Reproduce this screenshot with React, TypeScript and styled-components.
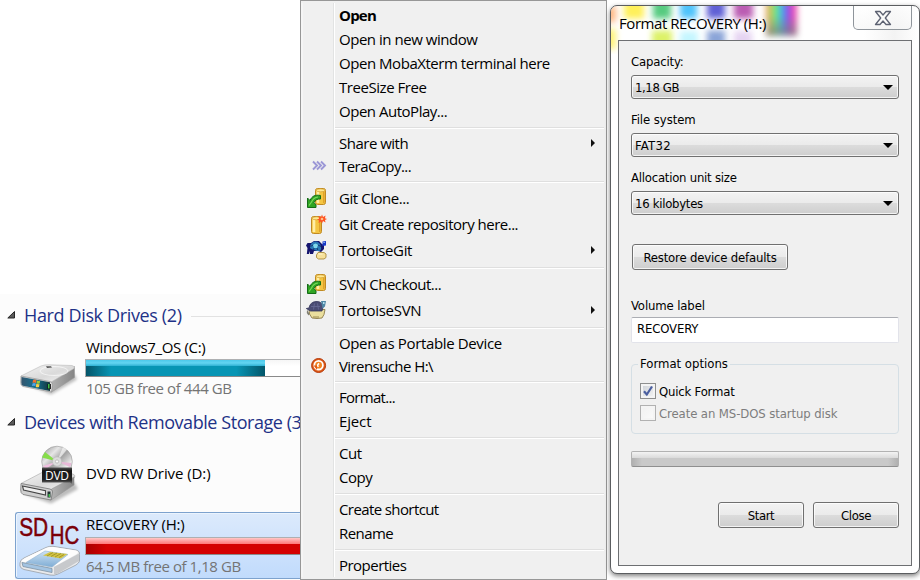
import React from "react";
import styled, { createGlobalStyle, css } from "styled-components";

const GlobalStyle = createGlobalStyle`
  *, *::before, *::after { box-sizing: border-box; }
  body { margin: 0; background: #fff; overflow: hidden; }
`;

const ui = `"Open Sans", "Noto Sans", sans-serif`;
const dlg = `"DejaVu Sans Condensed", "DejaVu Sans", sans-serif`;

const Page = styled.main`
  display: flex;
  align-items: flex-start;
  width: 920px;
  height: 580px;
  overflow: hidden;
  background: #fff;
  font: 15px ${ui};
  color: #000;
  white-space: nowrap;
`;

const Label = styled.span<{ $ls?: number }>`
  letter-spacing: ${(p) => p.$ls ?? -0.5}px;
`;

/* ---------- drive list ---------- */

const Explorer = styled.section`
  width: 300px;
  height: 580px;
  overflow: hidden;
  padding-top: 294px;
  background: linear-gradient(#fff 294px, #fcfcfc 294px);
`;

const GroupHeader = styled.header<{ $h: number; $ls: number }>`
  display: flex;
  align-items: center;
  height: ${(p) => p.$h}px;
  padding: 0 0 1px 7px;
  color: #1e3287;
  font-size: 18px;
  letter-spacing: ${(p) => p.$ls}px;
  svg { flex: none; margin: 0 9px 0 0; }
`;

const HeaderRule = styled.i`
  flex: 1;
  height: 1px;
  margin: 3px 0 0 9px;
  background: #e2e2e2;
`;

const Drive = styled.article<{ $h: number; $selected?: boolean }>`
  display: flex;
  height: ${(p) => p.$h}px;
  margin-left: 15px;
  border: 1px solid transparent;
  border-right: 0;
  ${(p) =>
    p.$selected &&
    css`
      border-color: #7da2ce;
      border-radius: 3px 0 0 3px;
      background: linear-gradient(#dceafc, #c1dbfc);
      box-shadow: inset 1px 1px 0 #ebf4fe;
    `}
`;

const DriveIcon = styled.div`
  flex: none;
  width: 69px;
  svg { display: block; overflow: visible; }
`;

const DriveBody = styled.div<{ $center?: boolean }>`
  display: flex;
  flex: 1;
  flex-direction: column;
  justify-content: ${(p) => (p.$center ? "center" : "flex-start")};
  padding: ${(p) => (p.$center ? "0 0 5px 1px" : "0")};
`;

const DriveName = styled.div<{ $h: number }>`
  height: ${(p) => p.$h}px;
  padding-left: 1px;
  line-height: ${(p) => p.$h - 2}px;
`;

const DriveMeta = styled.div`
  height: 23px;
  padding-left: 1px;
  line-height: 23px;
  color: #747474;
`;

const Gauge = styled.div`
  height: 18px;
  border: 1px solid #aeb0b2;
  border-bottom-color: #8a8a8a;
  border-right: 0;
  background: linear-gradient(#f6f6f6, #fff 40%);
`;

const GaugeFill = styled.div<{ $tone: "blue" | "red"; $w: number }>`
  width: ${(p) => p.$w}px;
  height: 16px;
  background: ${(p) =>
    p.$tone === "blue"
      ? `linear-gradient(#4cc8ea 0, #63d5f2 3px, #2eb1d3 6px, transparent 6px), linear-gradient(90deg, #045468, #0795b4 14%, #0795b4 84%, #04566a)`
      : `linear-gradient(#ffc9c9 0, #ff9c9c 3px, #f77 6px, transparent 6px), linear-gradient(90deg, #a80000, #d40000 9%)`};
`;

const Caret = () => (
  <svg width="8" height="8" viewBox="0 0 8 8">
    <path d="M7.5 .5V7H.8z" fill="#595959" stroke="#262626" />
  </svg>
);

const Defs = () => (
  <defs>
    <linearGradient id="lid" x1="0" y1="0" x2="1" y2="1">
      <stop offset="0" stopColor="#f4f4f4" />
      <stop offset=".55" stopColor="#dadada" />
      <stop offset="1" stopColor="#f5f5f5" />
    </linearGradient>
    <linearGradient id="side" x1="0" y1="0" x2="1" y2="0">
      <stop offset="0" stopColor="#b5b5b5" />
      <stop offset="1" stopColor="#858585" />
    </linearGradient>
    <linearGradient id="metal" x1="0" y1="0" x2="1" y2="1">
      <stop offset="0" stopColor="#8d8d8d" />
      <stop offset=".3" stopColor="#e6e6e6" />
      <stop offset=".5" stopColor="#a4a4a4" />
      <stop offset=".75" stopColor="#eee" />
      <stop offset="1" stopColor="#999" />
    </linearGradient>
    <linearGradient id="plate" x1="0" y1="0" x2="0" y2="1">
      <stop offset="0" stopColor="#555" />
      <stop offset=".2" stopColor="#151515" />
      <stop offset=".75" stopColor="#222" />
      <stop offset="1" stopColor="#777" />
    </linearGradient>
    <linearGradient id="glass" x1="0" y1="0" x2="1" y2="0">
      <stop offset="0" stopColor="#35566e" />
      <stop offset=".5" stopColor="#14708f" />
      <stop offset="1" stopColor="#12343c" />
    </linearGradient>
    <linearGradient id="card" x1="0" y1="0" x2="0" y2="1">
      <stop offset="0" stopColor="#cfe2f3" />
      <stop offset="1" stopColor="#7fadd5" />
    </linearGradient>
    <filter id="soft" x="-20%" y="-50%" width="140%" height="200%">
      <feGaussianBlur stdDeviation="1.5" />
    </filter>
  </defs>
);

/* Drive bodies share one 64-wide canvas that starts at the row's left edge. */
const HardDisk = () => (
  <svg width="64" height="66" viewBox="0 7.5 64 66">
    <Defs />
    <path d="M8 54 35 65 61 50 58 44z" opacity=".25" filter="url(#soft)" />
    <path d="M34 50 58.500 37V48L35.500 62.500 33 61.500z" fill="url(#side)" stroke="#999" strokeWidth=".6" />
    <path d="M5 46.500 25 36.500Q29 35 33 35.300L56 36Q59.500 37 58 39L36 52Q34 53 31 52.500L6 48.500z" fill="url(#lid)" stroke="#bbb" strokeWidth=".6" />
    <ellipse cx="38" cy="41.500" rx="14" ry="4.500" fill="none" stroke="#fff" opacity=".6" />
    <path d="M30 36.800h5l1 1.200-5 .4z" fill="#555" />
    <path d="M5 46.500 34 52Q37 53 36.500 56L35.500 62.500 7 57Q4.500 56 4.700 53z" fill="#dcdcdc" stroke="#888" strokeWidth=".6" />
    <path d="M5.500 47.500 34 52.800V61.500L7 56.200Q5.200 55.500 5.300 53z" fill="url(#glass)" />
    <path d="M17 50.500q1.800-1 3.500 0l-.5 3q-1.700-.8-3.500 0z" fill="#f07030" />
    <path d="M21 51q1.500.8 3.200.2l-.5 2.800q-1.500.7-3.200 0z" fill="#9ccb3c" />
    <path d="M16.500 54q1.600-.9 3.300 0l-.5 2.600q-1.600-.8-3.300 0z" fill="#50a5e8" />
    <path d="M20.300 54.300q1.500.8 3.200.2l-.5 2.900q-1.500.7-3.200 0z" fill="#fbd044" />
    <path d="M33.200 54.500v5" stroke="#111" strokeWidth="3.400" />
    <path d="M32.800 54.500v4.500" stroke="#46d14f" strokeWidth="1.400" />
  </svg>
);

const DvdDrive = () => (
  <svg width="64" height="66" viewBox="0 0 64 66">
    <path d="M8 55 35 64.500 62 50 58 43z" opacity=".25" filter="url(#soft)" />
    <path d="M5 44.500 27 33 57 35Q60 36.500 58.500 38.500L35.500 51z" fill="url(#lid)" stroke="#b0b0b0" strokeWidth=".7" />
    <path d="M35.500 50 58 38V46L35 61z" fill="url(#side)" stroke="#999" strokeWidth=".6" />
    <path d="M5 44.500 34 50Q37 51 36.500 53L35 61 7 55.500Q4.500 54 4.700 51z" fill="#cfcfcf" stroke="#777" strokeWidth=".8" />
    <path d="M6.500 47 29.500 51.800V56L7.500 51z" fill="#eee" stroke="#444" strokeWidth="1.100" />
    <path d="M33 52.500v6" stroke="#233" strokeWidth="3" />
    <path d="M33.300 55v3" stroke="#46c04f" strokeWidth="1.500" />
    <circle cx="41" cy="22.500" r="15.300" fill="url(#metal)" stroke="#999" strokeWidth=".6" />
    <path d="M41 22.500 26 18.500 29 13z" fill="#86dd4a" />
    <path d="M41 22.500 54 28 55.500 24z" fill="#e8b9d8" />
    <path d="M41 22.500 27 27 29.500 30z" fill="#f1bfe0" />
    <path d="M41 22.500 47 8 51 10.500z" fill="#fff" opacity=".6" />
    <circle cx="41" cy="22.500" r="4.600" fill="#dcdcdc" stroke="#bbb" strokeWidth=".6" />
    <circle cx="41" cy="22.500" r="1.600" fill="#fafafa" stroke="#999" strokeWidth=".5" />
    <path d="M26 28.500h30V45L54 43.500 26 43.500z" fill="url(#plate)" />
    <text x="41" y="40.500" fill="#fff" fontFamily="Open Sans, sans-serif" fontSize="12" textAnchor="middle" textLength="24">DVD</text>
  </svg>
);

const SdCard = () => (
  <svg width="64" height="66" viewBox="0 0 64 66">
    <g fill="#7b0008" stroke="#7b0008" strokeWidth=".5" fontFamily="Liberation Sans, sans-serif" fontSize="26.500">
      <text x="3.200" y="22.500" textLength="29" lengthAdjust="spacingAndGlyphs">SD</text>
      <text x="33.800" y="30.500" textLength="29.500" lengthAdjust="spacingAndGlyphs">HC</text>
    </g>
    <path d="M4 50 Q4 47 8 45L30 34.500Q33 33 37 33.300L60 37Q64 38 63.500 41.500V48Q63 50 60 52L42 61Q38 63 34 62L8 56.500Q4.500 55.500 4 53z" fill="#e9eaec" stroke="#9aa0a6" strokeWidth=".8" />
    <path d="M5 48.500Q6 46.500 9 45L30 35Q33 33.700 37 34L60 37.500Q64 39 60 41.500L42 51.500Q38 54 33 53z" fill="#fdfdfd" />
    <path d="M38 54 63 40.500V48L42 60.500 38 61.500z" fill="#c7c9cc" />
    <path d="M6 49.500 36 55.500V59.500L7 53.500z" fill="#a3c4e2" stroke="#7f93a5" strokeWidth=".8" />
    <path d="M10 49.500 29 38 52 41.500 36 54z" fill="url(#card)" stroke="#8fb1d0" strokeWidth=".6" />
    <path d="M27 42.500 34 39 51.500 41 45 45.500z" fill="#d2c344" />
    <path d="m31 43 6-3.500m-2 4 6-3.500m-2 4 6-3.500m-2 4 5-3" stroke="#8f821c" strokeWidth=".7" />
  </svg>
);

/* ---------- context menu ---------- */

const Menu = styled.nav`
  display: flex;
  flex-direction: column;
  width: 307px;
  height: 580px;
  padding: 3px 2px 0 2px;
  border: 1px solid #979797;
  background: linear-gradient(90deg, #f5f5f5 2px, #f0f0f0 2px, #f0f0f0 32px, #e2e3e3 32px, #e2e3e3 33px, #fff 33px, #fff 34px, #f0f0f0 34px) 0 2px / 100% 574px no-repeat #f0f0f0;
`;

const Item = styled.div<{ $h: number; $bold?: boolean }>`
  display: flex;
  align-items: center;
  height: ${(p) => p.$h}px;
  font-weight: ${(p) => (p.$bold ? 700 : 400)};
  line-height: 20px;
  ${Label} { padding-bottom: 2px; }
`;

const Slot = styled.span`
  display: flex;
  flex: none;
  width: 36px;
  height: 22px;
  padding-left: 3px;
  svg { display: block; }
`;

const SubArrow = styled.i`
  margin: -2px 9px 0 auto;
  border: solid transparent;
  border-width: 4px 0 4px 4px;
  border-left-color: #111;
`;

const Rule = styled.hr`
  flex: none;
  width: 269px;
  height: 2px;
  margin: 3px 0 3px 32px;
  border: 0;
  background: linear-gradient(#dfdfdf 50%, #fff 50%);
`;

const Cylinder = ({ x, y, h }: { x: number; y: number; h: number }) => (
  <g transform={`translate(${x} ${y})`}>
    <rect x=".5" y=".5" width="10" height={h} rx="2" fill="#f4c542" stroke="#c08a22" />
    <path d={`M3 3v${h - 4}`} stroke="#ffeea6" strokeWidth="2.600" />
    <path d={`M8.800 3v${h - 4}`} stroke="#dd9f2a" strokeWidth="1.400" />
    <ellipse cx="5.500" cy="2.300" rx="4.200" ry="1.500" fill="#ffe890" stroke="#c99427" strokeWidth=".6" />
  </g>
);

const Icons: Record<string, React.ReactNode> = {
  tera: (
    <path d="m7.500 6 4 4-4 4m4-8 4 4-4 4m4-8 4 4-4 4" transform="translate(-.5 -.5)" fill="none" stroke="#9b97d6" strokeWidth="1.900" />
  ),
  checkout: (
    <>
      <Cylinder x={9} y={0} h={16} />
      <path d="M1.500 19.500V10l2.500 2.500C6 8 9 6.500 14.500 7.500V11q-4.500-.5-6.500 3.500l2 2.500V19.500z" fill="#2fa423" stroke="#146c16" />
      <path d="M3 17.500 5.500 14Q7.500 9.500 12 9" fill="none" stroke="#7bd95c" strokeWidth="1.200" />
    </>
  ),
  create: (
    <>
      <Cylinder x={5} y={2} h={17} />
      <path d="m16 .5 1 2.500L19.500 1.500l-.5 2.800 2 .7-2 1 .5 2.500-2.500-1.500L16 9.500 15 7.500 12.500 9l.5-2.500-2-1 2-.7L12.500 2 15 3z" fill="#ff5522" />
      <circle cx="16" cy="5" r="1.300" fill="#ffc08a" />
    </>
  ),
  tgit: (
    <>
      <path d="M0 5.500 1.500 3h3.500L8 1h5l3 3 2 1v4l-3 3-3-1H8l-1 3H4l-.5-3L3 14H.8l.7-6z" fill="#14146e" />
      <path d="M4 7q1-5.500 5.500-5.500T15 7t-5.500 3.500T4 7z" fill="#2878b4" />
      <path d="M7 5q2.500-3 5 0l-1 3H8z" fill="#7fd8ea" />
      <path d="M4.500 6.500 7 5m8 1.500L12 5m-4 3-.5 2.500m3.500-2.500.8 2" stroke="#14265c" strokeWidth=".8" />
      <path d="M16.500 1.500 20 1v4.500L16.500 6z" fill="#1638c8" />
      <path d="M17.500 2.500h1.200" stroke="#a9d4ff" strokeWidth="1.200" />
      <path d="M10.500 15 12 12.500h6L20 14v3.500L18 19h-5.500l-2-1.500z" fill="#f7e19a" stroke="#a98b3c" strokeWidth=".9" />
      <path d="M12.500 14h4" stroke="#fff6cf" />
    </>
  ),
  tsvn: (
    <>
      <path d="M3 9.500h16L18 14.500l-2 3.500-5 .5-5-.5L3.500 14z" fill="#ebdf9e" stroke="#8b7b46" strokeWidth=".9" />
      <path d="M.3 8.500 3 8Q4 2 10 1.500T17 7l-1 4H4.500z" fill="#4b4c74" stroke="#33355a" strokeWidth=".8" />
      <path d="M5 6.500h9M8.500 3.500l-1 6m4-6 1 6" stroke="#686b96" strokeWidth=".8" />
      <path d="M15 1h5l-1 5.500-2.500 2z" fill="#4f86a4" />
      <path d="M17 2h1.500v2H17z" fill="#b4dff0" />
      <path d="M1 9.500 3.500 14l-1 1.500L.8 13z" fill="#7d7c70" />
      <path d="M7 17h6" stroke="#9c8b50" />
    </>
  ),
  virus: (
    <>
      <circle cx="12.600" cy="9.500" r="7" fill="#dd5814" stroke="#b53a0c" />
      <circle cx="12.600" cy="9.200" r="4.300" fill="#f28320" stroke="#fff" strokeWidth="1.800" />
      <path d="M12.500 10.800q-2-1.800.7-3.300" fill="none" stroke="#fff" strokeWidth="1.500" />
      <path d="M7.600 9.500h3.400v4.500z" fill="#e05a14" />
    </>
  ),
};

type Entry = null | { t: string; h?: number; ls?: number; icon?: string; sub?: boolean; bold?: boolean };

const entries: Entry[] = [
  { t: "Open", bold: true, ls: -0.8 },
  { t: "Open in new window", ls: -0.47 },
  { t: "Open MobaXterm terminal here", ls: -0.46 },
  { t: "TreeSize Free", ls: -0.45 },
  { t: "Open AutoPlay...", ls: -0.48 },
  null,
  { t: "Share with", sub: true, ls: -0.5 },
  { t: "TeraCopy...", h: 22, icon: "tera", ls: -0.55 },
  null,
  { t: "Git Clone...", h: 26, icon: "checkout", ls: -0.45 },
  { t: "Git Create repository here...", h: 26, icon: "create", ls: -0.5 },
  { t: "TortoiseGit", h: 26, icon: "tgit", sub: true, ls: -0.38 },
  null,
  { t: "SVN Checkout...", h: 26, icon: "checkout", ls: -0.52 },
  { t: "TortoiseSVN", h: 26, icon: "tsvn", sub: true, ls: -0.3 },
  null,
  { t: "Open as Portable Device", ls: -0.36 },
  { t: "Virensuche H:\\", h: 22, icon: "virus", ls: -0.58 },
  null,
  { t: "Format...", ls: -0.7 },
  { t: "Eject", ls: -0.15 },
  null,
  { t: "Cut", ls: -0.5 },
  { t: "Copy", ls: -0.5 },
  null,
  { t: "Create shortcut", ls: -0.6 },
  { t: "Rename", ls: -0.56 },
  null,
  { t: "Properties", ls: -0.53 },
];

/* ---------- format dialog ---------- */

const Dialog = styled.section`
  display: flex;
  flex-direction: column;
  width: 310px;
  height: 569px;
  margin: 5px 0 0 3px;
  padding: 0 7px 7px;
  border: 1px solid #5b5d60;
  border-radius: 7px;
  background:
    linear-gradient(90deg, transparent 82%, rgba(240, 240, 240, 0.8) 92%, transparent) 0 0 / 100% 34px no-repeat,
    #fff;
  box-shadow: 0 2px 5px rgba(0, 0, 0, 0.5), inset 0 0 0 1px rgba(255, 255, 255, 0.7);
  font: 13px ${dlg};
`;

const TitleBar = styled.header`
  position: relative;
  display: flex;
  flex: none;
  justify-content: space-between;
  height: 34px;
`;

/* Blurred colours showing through the translucent title bar. */
const Backdrop = styled.div`
  position: absolute;
  inset: 0 0 -14px -7px;
  overflow: hidden;
  border-top-left-radius: 6px;
`;

const Blot = styled.span<{ $x: number; $y: number; $w: number; $h: number; $c: string }>`
  position: absolute;
  left: ${(p) => p.$x}px;
  top: ${(p) => p.$y}px;
  width: ${(p) => p.$w}px;
  height: ${(p) => p.$h}px;
  background: ${(p) => p.$c};
  filter: blur(3px);
`;

const blots: [number, number, number, number, string][] = [
  [-6, 0, 11, 16, "#ffb985"],
  [13, -7, 20, 20, "#fff05a"],
  [42, -7, 18, 20, "#56cb80"],
  [69, -7, 17, 20, "#4fc4fb"],
  [96, -7, 18, 20, "#6060d5"],
  [123, -7, 19, 20, "#bb5cb3"],
  [-6, 23, 11, 20, "#fff478"],
  [41, 24, 20, 20, "#ddf268"],
  [69, 25, 18, 20, "#c5f6ff"],
  [96, 24, 18, 20, "#8ba5d8"],
  [123, 25, 18, 20, "#e6d4f2"],
  [155, -7, 31, 37, "linear-gradient(transparent 45%, rgba(128,128,128,.85)), linear-gradient(90deg,#ee8a50,#b8e060 20%,#4ce3a0 36%,#4fb7ef 52%,#6f5cf0 66%,#e445cd 84%,#ee5292)"],
];

const Title = styled.h1`
  position: relative;
  margin: 6px 0 0 1px;
  font: 15px/22px ${ui};
  letter-spacing: -0.44px;
  text-shadow: 0 0 7px rgba(255, 255, 255, 0.8);
`;

const CloseBox = styled.button`
  position: relative;
  display: flex;
  align-items: center;
  justify-content: center;
  width: 59px;
  height: 24px;
  padding: 0 0 0 1px;
  border: 1px solid #8f959b;
  border-top: 0;
  border-radius: 0 0 5px 5px;
  background: linear-gradient(rgba(255, 255, 255, 0.6), rgba(244, 244, 244, 0.6));
`;

const Panel = styled.form`
  position: relative;
  display: flex;
  flex: none;
  flex-direction: column;
  width: 294px;
  height: 526px;
  padding: 11px 12px 0;
  border: 1px solid #6d6f72;
  background: #f0f0f0;
`;

const Field = styled.label<{ $gap?: number }>`
  display: flex;
  flex-direction: column;
  margin-bottom: ${(p) => p.$gap ?? 11}px;
`;

const Caption = styled.span<{ $ls: number; $h?: number }>`
  height: ${(p) => p.$h ?? 23}px;
  line-height: 20px;
  letter-spacing: ${(p) => p.$ls}px;
`;

const face = css`
  border: 1px solid #707070;
  border-radius: 3px;
  background: linear-gradient(#f3f3f3, #ebebeb 48%, #dcdcdc 50%, #cecece);
  box-shadow: inset 0 0 0 1px rgba(255, 255, 255, 0.75);
`;

const Combo = styled.div<{ $ls: number }>`
  ${face}
  display: flex;
  align-items: center;
  justify-content: space-between;
  height: 24px;
  padding: 0 5px 0 3px;
  letter-spacing: ${(p) => p.$ls}px;
  &::after {
    content: "";
    border: solid transparent;
    border-width: 5px 5px 0;
    border-top-color: #000;
  }
`;

const Button = styled.button<{ $w: number; $ls: number }>`
  ${face}
  width: ${(p) => p.$w}px;
  height: 26px;
  padding: 0;
  color: #000;
  font: 13px ${dlg};
  letter-spacing: ${(p) => p.$ls}px;
`;

const RestoreRow = styled.div`
  margin: 18px 0 26px 1px;
`;

const TextBox = styled.div`
  height: 26px;
  padding: 0 5px;
  border: 1px solid #e2e3ea;
  border-top-color: #abadb3;
  border-radius: 2px;
  background: #fff;
  line-height: 22px;
  letter-spacing: -0.15px;
`;

const Options = styled.fieldset`
  height: 80px;
  margin: 11px 0 17px;
  padding: 6px 8px 0;
  border: 1px solid #d5dfe5;
  border-radius: 4px;
  legend {
    height: 20px;
    padding: 0 2px;
    margin-left: -2px;
    line-height: 20px;
  }
`;

const CheckRow = styled.div<{ $ls: number; $off?: boolean }>`
  display: flex;
  align-items: center;
  gap: 3px;
  height: 22px;
  color: ${(p) => (p.$off ? "#7d7d7d" : "#000")};
  letter-spacing: ${(p) => p.$ls}px;
`;

const CheckBox = styled.span<{ $off?: boolean }>`
  display: grid;
  place-items: center;
  width: 16px;
  height: 16px;
  border: 1px solid ${(p) => (p.$off ? "#b1b1b1" : "#8e8f8f")};
  background: linear-gradient(135deg, ${(p) => (p.$off ? "#f0f0f0, #fbfbfb" : "#cbcfd5, #f6f6f6")}) #f4f4f4;
  box-shadow: inset 0 0 0 2px #f4f4f4;
`;

const Progress = styled.div`
  height: 16px;
  border: 1px solid #b2b2b2;
  border-bottom-color: #8f8f8f;
  border-radius: 2px;
  background:
    linear-gradient(#f3f3f3, #dadada 6px, transparent 6px),
    linear-gradient(90deg, #b0b0b0, #c9c9c9 10px, #c9c9c9 calc(100% - 10px), #b0b0b0);
`;

const Actions = styled.div`
  display: flex;
  justify-content: flex-end;
  gap: 9px;
  margin-top: 35px;
`;

export default function App() {
  return (
    <Page>
      <GlobalStyle />
      <Explorer>
        <GroupHeader $h={42} $ls={-0.36}>
          <Caret />
          Hard Disk Drives (2)
          <HeaderRule />
        </GroupHeader>
        <Drive $h={71}>
          <DriveIcon><HardDisk /></DriveIcon>
          <DriveBody>
            <DriveName $h={22}><Label $ls={-0.35}>Windows7_OS (C:)</Label></DriveName>
            <Gauge><GaugeFill $tone="blue" $w={179} /></Gauge>
            <DriveMeta><Label $ls={-0.41}>105 GB free of 444 GB</Label></DriveMeta>
          </DriveBody>
        </Drive>
        <GroupHeader $h={31} $ls={-0.44}>
          <Caret />
          Devices with Removable Storage (3)
        </GroupHeader>
        <Drive $h={74}>
          <DriveIcon><DvdDrive /></DriveIcon>
          <DriveBody $center>
            <Label $ls={-0.08}>DVD RW Drive (D:)</Label>
          </DriveBody>
        </Drive>
        <Drive $h={67} $selected>
          <DriveIcon><SdCard /></DriveIcon>
          <DriveBody>
            <DriveName $h={24}><Label $ls={-0.22}>RECOVERY (H:)</Label></DriveName>
            <Gauge><GaugeFill $tone="red" $w={230} /></Gauge>
            <DriveMeta><Label $ls={-0.43}>64,5 MB free of 1,18 GB</Label></DriveMeta>
          </DriveBody>
        </Drive>
      </Explorer>

      <Menu>
        {entries.map((e, i) =>
          e === null ? (
            <Rule key={i} />
          ) : (
            <Item key={i} $h={e.h ?? 24} $bold={e.bold}>
              <Slot>{e.icon && <svg width="24" height="22" viewBox="0 0 24 22">{Icons[e.icon]}</svg>}</Slot>
              <Label $ls={e.ls}>{e.t}</Label>
              {e.sub && <SubArrow />}
            </Item>
          )
        )}
      </Menu>

      <Dialog>
        <TitleBar>
          <Backdrop>
            {blots.map(([x, y, w, h, c], i) => (
              <Blot key={i} $x={x} $y={y} $w={w} $h={h} $c={c} />
            ))}
          </Backdrop>
          <Title>Format RECOVERY (H:)</Title>
          <CloseBox type="button" aria-label="Close window">
            <svg width="18" height="16" viewBox="0 0 18 16">
              <path d="M1.500 1.500h4.500L9 5l3-3.500h4.500L11.300 8l5.200 6.500H12L9 11l-3 3.500H1.500L6.700 8z" fill="#fafafa" stroke="#5d6272" strokeWidth="1.300" strokeLinejoin="round" />
            </svg>
          </CloseBox>
        </TitleBar>
        <Panel>
          <Field>
            <Caption $ls={-0.18}>Capacity:</Caption>
            <Combo $ls={-0.4}>1,18 GB</Combo>
          </Field>
          <Field>
            <Caption $ls={-0.08}>File system</Caption>
            <Combo $ls={0.3}>FAT32</Combo>
          </Field>
          <Field>
            <Caption $ls={-0.24}>Allocation unit size</Caption>
            <Combo $ls={-0.28}>16 kilobytes</Combo>
          </Field>
          <RestoreRow>
            <Button type="button" $w={156} $ls={-0.18}>Restore device defaults</Button>
          </RestoreRow>
          <Field $gap={0}>
            <Caption $h={21} $ls={-0.13}>Volume label</Caption>
            <TextBox>RECOVERY</TextBox>
          </Field>
          <Options>
            <legend>Format options</legend>
            <CheckRow $ls={-0.2}>
              <CheckBox>
                <svg width="12" height="12" viewBox="0 0 12 12">
                  <path d="M2 6.200 4.800 9.500 10 1.500" fill="none" stroke="#4b5fa0" strokeWidth="2.200" />
                </svg>
              </CheckBox>
              Quick Format
            </CheckRow>
            <CheckRow $off $ls={-0.1}>
              <CheckBox $off />
              Create an MS-DOS startup disk
            </CheckRow>
          </Options>
          <Progress />
          <Actions>
            <Button type="button" $w={86} $ls={-0.42}>Start</Button>
            <Button type="button" $w={86} $ls={-0.34}>Close</Button>
          </Actions>
        </Panel>
      </Dialog>
    </Page>
  );
}
